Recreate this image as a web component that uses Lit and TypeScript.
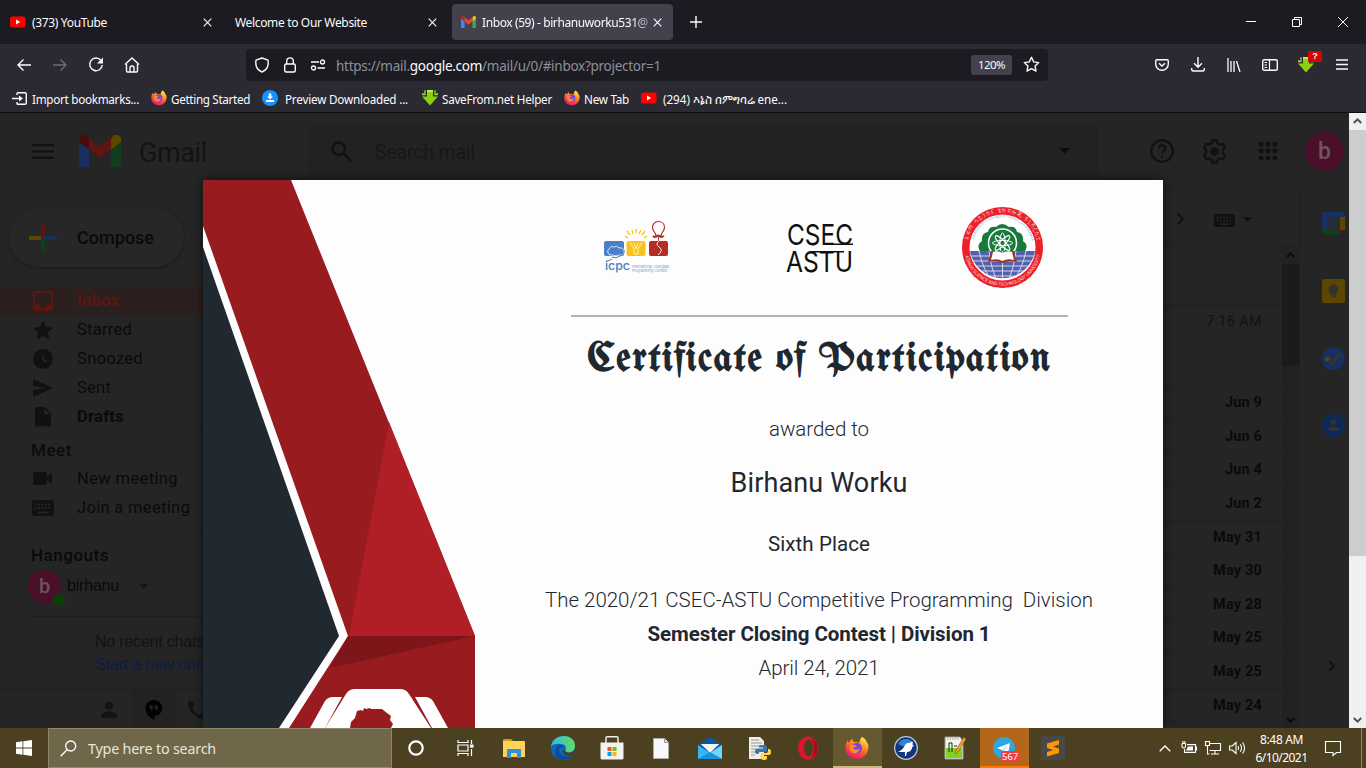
import { LitElement, html, svg, css } from "lit";
import { customElement, property } from "lit/decorators.js";
import { classMap } from "lit/directives/class-map.js";

/** Text run whose tracking is adjusted so that it spans a given width. */
@customElement("fit-text")
class FitText extends LitElement {
  @property({ type: Number }) w = 0;
  static styles = css`
    :host { display: inline-block; white-space: pre; flex: none; }
  `;
  firstUpdated() {
    const n = (this.textContent || "").length;
    const natural = this.getBoundingClientRect().width;
    if (this.w && n > 1) this.style.letterSpacing = `${(this.w - natural) / n}px`;
  }
  render() { return html`<slot></slot>`; }
}

const icon = (w: number, h: number, body: unknown, vb = `0 0 ${w} ${h}`) =>
  html`<svg width=${w} height=${h} viewBox=${vb} fill="none" preserveAspectRatio="none">${body}</svg>`;

const youtube = () => icon(16, 16, svg`<rect y="2.5" width="15.5" height="11" rx="2.5" fill="#f00"/><path d="M6 5.6v4.8L10.2 8z" fill="#fff"/>`);
const close = () => icon(9, 9, svg`<path d="M.7.7l7.6 7.6M8.3.7L.7 8.3" stroke="#fbfbfe" stroke-width="1.1"/>`);
const gmailM = (w: number, h: number, c: string[]) => icon(w, h, svg`
  <path d="M0 5v24q0 3 3 3h7V13z" fill=${c[0]}/><path d="M32 13v19h7q3 0 3-3V5z" fill=${c[1]}/>
  <path d="M32 4v11l10-8V4.5C42 0 37-1.500 34 1z" fill=${c[2]}/><path d="M10 3v12L0 7V4.500C0 0 5-1.500 8 1z" fill=${c[3]}/>
  <path d="M10 3l11 8.500L32 3v11.500l-11 8.500-11-8.500z" fill=${c[4]}/>`, "0 0 42 32");
const firefox = (s: number) => icon(s, s, svg`
  <defs><linearGradient id="ffo" x1=".8" y1="0" x2=".3" y2="1"><stop offset="0" stop-color="#fff44f"/><stop offset=".35" stop-color="#ff9a20"/><stop offset=".65" stop-color="#ff4a3c"/><stop offset="1" stop-color="#e31587"/></linearGradient></defs>
  <path d="M12 .5c2 1 3 2.300 3.400 4C17.500 7 16.500 10 15.500 12 14 15 11 16.300 8 16.200 3.500 16 .2 12.500.3 8.300.4 6 1 4.200 2 3c0 .8.300 1.300.7 1.700C3.300 3.600 4.200 2.700 5.200 2c0 1 .3 1.800 1 2.300C8 4.200 9 4.300 10 5c.5-1.500.8-3 2-4.500z" fill="url(#ffo)"/>
  <circle cx="8.300" cy="8.500" r="3.700" fill="#7542e5"/><path d="M3.500 6.500c2-1 3.500-.3 5 1-1.500 0-2 .8-2.800 1.200 1 1.300 3.300 1.300 4.800-.2-.3 3-3 4.500-5.300 3.400C3.400 11 2.800 8.500 3.500 6.500z" fill="#ff8a2a"/>`, "0 0 17 17");
const saveFrom = () => icon(16, 16, svg`<path d="M5 0h6v6.500h5L8 15.500 0 6.500h5z" fill="#8ad010"/><path d="M3 .3v4.400H.8V3M13 .3v4.400h2.200V3" stroke="#a8d840" stroke-width="1.300"/><path d="M5 0h6v2H5z" fill="#c0ea50"/>`);
const line = "#fbfbfe";
const chevR = () => icon(8, 12, svg`<path d="M1 1l5 5-5 5" stroke="#101010" stroke-width="1.800"/>`);
const caret = () => icon(11, 6, svg`<path d="M0 0h11L5.500 6z" fill="#0d0d0d"/>`);
const scrollArrow = (up: boolean, c: string) => icon(9, 6, svg`<path d=${up ? "M.8 5l3.700-3.700L8.200 5" : "M.8 1l3.700 3.700L8.200 1"} stroke=${c} stroke-width="2"/>`);

const shared = css`
  :host { box-sizing: border-box; }
  *, *::before { box-sizing: border-box; }
  svg { display: block; flex: none; overflow: visible; }
  .cell { display: flex; align-items: center; justify-content: center; flex: none; }
`;

@customElement("browser-chrome")
class BrowserChrome extends LitElement {
  static styles = [shared, css`
    :host { display: block; height: 113px; color: #fbfbfe; background: #2b2a33; border-bottom: 1px solid #0c0c0d; font: 12px/16px "Noto Sans", "Open Sans", sans-serif; }
    .tabs { display: flex; height: 44px; background: #1c1b22; align-items: center; }
    .tab { display: flex; align-items: center; height: 36px; width: 221px; border-radius: 4px; padding: 0 11px 0 9px; gap: 6px; flex: none; }
    .tab.first { width: 225px; padding: 0 13px 0 10px; }
    .tab.second { width: 227px; padding: 0 15px 0 10px; }
    .tab.on { background: #42414d; }
    .tab .name { flex: 1; white-space: nowrap; height: 16px; margin-top: 2px; min-width: 0; }
    .tab.on .name { -webkit-mask: linear-gradient(90deg, #000 88%, rgba(0, 0, 0, .25)); margin-right: -6px; }
    .plus { width: 45px; }
    .win { margin-left: auto; display: flex; height: 44px; }
    .win .cell { width: 46px; }
    .nav { display: flex; height: 40px; align-items: center; padding-top: 1px; }
    .nav .cell { width: 36px; }
    .left { display: flex; width: 246px; padding-left: 6px; }
    .url { display: flex; align-items: center; width: 802px; height: 32px; border-radius: 4px; background: #1c1b22; padding-left: 2px; }
    .url .cell { width: 28px; }
    .addr { color: #8f8f98; font-size: 13.500px; margin: 2px 0 0 4px; flex: 1; }
    .addr b { color: #fbfbfe; font-weight: 400; }
    .zoom { background: #42414d; border-radius: 3px; width: 41px; height: 20px; display: flex; align-items: center; justify-content: center; font-size: 11.500px; }
    .url .star { width: 36px; padding-left: 3px; }
    .tools { display: flex; margin-left: 96px; }
    .sf { position: relative; }
    .badge { position: absolute; left: 20px; top: -6px; width: 14px; height: 11px; background: #d90000; border-radius: 1px; font: bold 9px/11px "Liberation Sans", sans-serif; text-align: center; }
    .marks { display: flex; height: 28px; align-items: center; padding-left: 10px; font-size: 11.700px; }
    .mark { display: flex; align-items: center; }
    .mark fit-text { margin-top: 2px; }
  `];
  render() {
    const mark = (ic: unknown, t: string, w: number, gap: number, ml: number) =>
      html`<div class="mark" style="gap:${gap}px;margin-left:${ml}px">${ic}<fit-text .w=${w}>${t}</fit-text></div>`;
    return html`
      <div class="tabs">
        <div class="tab first">${youtube()}<div class="name"><fit-text .w=${75}>(373) YouTube</fit-text></div>${close()}</div>
        <div class="tab second"><div class="name"><fit-text .w=${132}>Welcome to Our Website</fit-text></div>${close()}</div>
        <div class="tab on">${gmailM(15, 12, ["#4285f4", "#34a853", "#fbbc04", "#c5221f", "#ea4335"])}<div class="name"><fit-text .w=${166}>Inbox (59) - birhanuworku531@</fit-text></div>${close()}</div>
        <div class="cell plus">${icon(12, 12, svg`<path d="M6 0v12M0 6h12" stroke=${line} stroke-width="1.400"/>`)}</div>
        <div class="win">
          <div class="cell">${icon(10, 10, svg`<path d="M0 4.500h10" stroke="#fff"/>`)}</div>
          <div class="cell">${icon(10, 10, svg`<path d="M.5 2.500h7v7h-7zM2.500 2.500v-2h7v7h-2" stroke="#fff"/>`)}</div>
          <div class="cell">${icon(10, 10, svg`<path d="M0 0l10 10M10 0L0 10" stroke="#fff"/>`)}</div>
        </div>
      </div>
      <div class="nav">
        <div class="left">
          <div class="cell">${icon(16, 16, svg`<path d="M15 8H2M7.500 2.500L2 8l5.500 5.500" stroke=${line} stroke-width="1.400"/>`)}</div>
          <div class="cell">${icon(16, 16, svg`<path d="M1 8h13M8.500 2.500L14 8l-5.500 5.500" stroke="#6e6d75" stroke-width="1.400"/>`)}</div>
          <div class="cell">${icon(16, 16, svg`<path d="M13 3.500a6.300 6.300 0 1 0 1.300 4.500" stroke=${line} stroke-width="1.400"/><path d="M15 .5v6H9z" fill=${line}/>`)}</div>
          <div class="cell">${icon(16, 16, svg`<path d="M1 7.500L8 1l7 6.500M2.500 7v7q0 1 1 1h9q1 0 1-1V7M6 15v-4q0-2 2-2t2 2v4" stroke=${line} stroke-width="1.400"/>`)}</div>
        </div>
        <div class="url">
          <div class="cell">${icon(16, 16, svg`<path d="M8 1l6 2.200c.8 5-1 9.800-6 11.800C3 13 1.200 8.200 2 3.200z" stroke=${line} stroke-width="1.400" stroke-linejoin="round"/>`)}</div>
          <div class="cell">${icon(16, 16, svg`<rect x="2.700" y="7" width="10.600" height="8" rx="1.500" stroke=${line} stroke-width="1.400"/><path d="M4.700 7V4.200a3.300 3.300 0 0 1 6.600 0V7" stroke=${line} stroke-width="1.400"/>`)}</div>
          <div class="cell">${icon(16, 12, svg`<path d="M1 3h8M7.500 9H15" stroke=${line} stroke-width="1.400"/><circle cx="12.500" cy="3" r="2" stroke=${line} stroke-width="1.300"/><circle cx="3.500" cy="9" r="2" stroke=${line} stroke-width="1.300"/>`)}</div>
          <div class="addr"><fit-text .w=${325}>https://mail.<b>google.com</b>/mail/u/0/#inbox?projector=1</fit-text></div>
          <div class="zoom"><fit-text .w=${27}>120%</fit-text></div>
          <div class="cell star">${icon(17, 17, svg`<path d="M8.500 1.300l2.200 4.600 5 .7-3.600 3.500.9 5-4.500-2.400L4 15.100l.9-5L1.300 6.600l5-.7z" stroke=${line} stroke-width="1.400" stroke-linejoin="round"/>`)}</div>
        </div>
        <div class="tools">
          <div class="cell">${icon(14, 12, svg`<path d="M2 .7h10q1.300 0 1.300 1.300v3c0 3.500-2.800 6.300-6.300 6.300S.7 8.500.7 5V2Q.7.700 2 .7zM4 4.300l3 2.800 3-2.800" stroke=${line} stroke-width="1.400"/>`)}</div>
          <div class="cell">${icon(14, 15, svg`<path d="M7 0v10M3 6.200l4 4 4-4M.7 11v1.500q0 1.500 1.500 1.500h9.600q1.500 0 1.500-1.500V11" stroke=${line} stroke-width="1.400"/>`)}</div>
          <div class="cell">${icon(14, 14, svg`<path d="M1 0v14M4 3v11M7 3v11M9.500 3L13 14" stroke=${line} stroke-width="1.300"/>`)}</div>
          <div class="cell">${icon(16, 12, svg`<rect x=".7" y=".7" width="14.600" height="10.600" rx="1.500" stroke=${line} stroke-width="1.400"/><path d="M7.500 0v12M2.500 3.500H5M2.500 6H5M2.500 8.500H5" stroke=${line} stroke-width="1.200"/>`)}</div>
          <div class="cell sf">${saveFrom()}<span class="badge">?</span></div>
          <div class="cell">${icon(12, 11, svg`<path d="M0 1h12M0 5.500h12M0 10h12" stroke=${line} stroke-width="1.400"/>`)}</div>
        </div>
      </div>
      <div class="marks">
        ${mark(icon(16, 13, svg`<path d="M6 3V1.500Q6 .7 7 .7h7q1.300 0 1.300 1.300v9q0 1.300-1.300 1.300H7q-1 0-1-.8V10M1 6.500h9" stroke=${line} stroke-width="1.400"/><path d="M8 3.500l4 3-4 3z" fill=${line}/>`), "Import bookmarks...", 107, 5, 1)}
        ${mark(firefox(16), "Getting Started", 79, 4, 12)}
        ${mark(icon(16, 16, svg`<circle cx="8" cy="8" r="8" fill="#1791ff"/><path d="M6.700 3.500h2.600v3H11L8 9.500l-3-3h1.700zM4 10h8v2H4z" fill="#fff"/>`), "Preview Downloaded ...", 123, 7, 12)}
        ${mark(saveFrom(), "SaveFrom.net Helper", 110, 4, 14)}
        ${mark(firefox(16), "New Tab", 45, 4, 12)}
        ${mark(youtube(), "(294) እኔስ በምግባሬ ene...", 124, 6, 12)}
      </div>`;
  }
}

const RED = "#5e1612", BLUE = "#183060", GREEN = "#103d1b", YELLOW = "#5c4600";

@customElement("mail-page")
class MailPage extends LitElement {
  static styles = [shared, css`
    :host { display: flex; height: 615px; background: #252525; color: #0a0a0a; font: 16.600px/28px Roboto, sans-serif; overflow: hidden; }
    .main { width: 1349px; display: flex; flex-direction: column; flex: none; }
    .head { height: 77px; border-bottom: 1px solid #212121; display: flex; align-items: center; padding-left: 32px; flex: none; }
    .brand { font: 27px/36px Roboto, sans-serif; color: #131313; margin: 3px 0 0 18px; width: 168px; }
    .search { width: 791px; height: 55px; background: #222; border-radius: 8px; display: flex; align-items: center; padding: 0 28px 0 24px; gap: 23px; color: #171717; font-size: 19.500px; }
    .search .ph { flex: 1; margin-top: 3px; }
    .acts { display: flex; margin-left: 37px; }
    .acts .cell { width: 53px; }
    .me { width: 39px; height: 39px; border-radius: 50%; background: #4a1029; color: #6a5660; display: flex; align-items: center; justify-content: center; font: 500 23px/39px Roboto, sans-serif; margin-left: 11px; }
    .body { display: flex; flex: 1; min-height: 0; }
    .side { width: 203px; flex: none; display: flex; flex-direction: column; }
    .compose { width: 175px; height: 59px; margin: 18px 0 19px 9px; border-radius: 30px; box-shadow: 0 1px 3px rgba(0, 0, 0, .35); background: #272727; display: flex; align-items: center; gap: 20px; padding-left: 20px; font: 500 18px/28px Roboto, sans-serif; flex: none; }
    .row { height: 29px; display: flex; align-items: center; padding-left: 31px; flex: none; }
    .row .ic { width: 46px; }
    .row.sel { background: #2b201e; color: #5e1612; font-weight: 700; }
    .row.bold { font-weight: 700; }
    .row .ic svg { margin-left: 2px; }
    .row .ic.wide svg { margin-left: 1px; }
    .sec { padding: 9px 0 0 31px; height: 38px; font-weight: 500; font-size: 17px; border-top: 1px solid #202020; flex: none; }
    .sec.meet { margin-top: -5px; }
    .sec.chat { margin-top: 9px; }
    .user { display: flex; align-items: center; height: 34px; margin-left: 28px; flex: none; position: relative; font: 16px/20px "Liberation Sans", sans-serif; gap: 6px; }
    .user .me { width: 33px; height: 33px; font-size: 20px; margin: 0; }
    .dot { position: absolute; left: 25px; top: 25px; width: 12px; height: 12px; border-radius: 50%; background: #0f3d08; }
    .user svg { margin-left: 14px; }
    .chats { margin: 13px 0 0 28px; border-top: 1px solid #1f1f1f; padding: 13px 0 0 67px; height: 73px; font: 16px/23px "Liberation Sans", sans-serif; color: #121212; overflow: hidden; flex: none; }
    .link { color: #0a1d45; }
    .foot { display: flex; border-top: 1px solid #1f1f1f; height: 40px; padding-left: 87px; overflow: hidden; }
    .foot .cell { width: 44px; padding-top: 2px; }
    .foot .pick { background: #222; }
    .list { width: 1096px; display: flex; flex-direction: column; flex: none; }
    .bar { height: 57px; border-bottom: 1px solid #202020; display: flex; align-items: center; justify-content: flex-end; padding-right: 47px; flex: none; }
    .bar .next { margin: 2px 29px 0 0; }
    .bar .kb { margin: 5px 8px 0 0; }
    .bar > svg { margin-top: 2px; }
    .rows { display: flex; flex: 1; min-height: 0; }
    .mails { flex: 1; overflow: hidden; }
    .gap { height: 58px; border-bottom: 1px solid #202020; }
    .mail { display: flex; justify-content: flex-end; padding-right: 20px; height: 33.630px; line-height: 34px; border-bottom: 1px solid #202020; font-size: 14.500px; font-weight: 700; }
    .mail.read { height: 81px; font-weight: 400; color: #131313; }
    .sb { width: 17px; background: #222; display: flex; flex-direction: column; align-items: center; padding: 5px 0; }
    .sb .thumb { width: 17px; height: 102px; margin: 6px 0 auto; background: #1b1b1b; }
    .panel { width: 50px; border-left: 1px solid #1f1f1f; display: flex; flex-direction: column; align-items: center; padding: 22px 0 0 18px; flex: none; }
    .panel svg { margin-bottom: 44px; }
    .panel .more { margin: 179px 0 0 -4px; }
    .outer { width: 17px; background: #f0f0f0; display: flex; flex-direction: column; align-items: center; padding: 5px 0; flex: none; }
    .outer .thumb { width: 17px; height: 426px; background: #cdcdcd; margin: 6px 0 auto; }
  `];
  render() {
    const k = "#111";
    const nav = (ic: unknown, t: string, w: number, c = "") =>
      html`<div class=${classMap({ row: true, sel: c === "sel", bold: c === "bold" })}><div class=${classMap({ ic: true, wide: c === "wide" })}>${ic}</div><fit-text .w=${w}>${t}</fit-text></div>`;
    const dates: [string, number][] = [["Jun 9", 37], ["Jun 6", 37], ["Jun 4", 37], ["Jun 2", 37], ["May 31", 49], ["May 30", 49], ["May 28", 49], ["May 25", 49], ["May 25", 49], ["May 24", 49]];
    const keyboard = (w: number, h: number) => icon(w, h, svg`<rect width="22" height="16" rx="2" fill=${k}/><path d="M2.500 4.500h17M2.500 8h17" stroke="#252525" stroke-width="2" stroke-dasharray="2 1.400"/><path d="M6 12.500h10" stroke="#252525" stroke-width="1.800"/>`, "0 0 22 16");
    return html`
      <div class="main">
        <div class="head">
          ${icon(22, 15, svg`<path d="M0 1.200h22M0 7.500h22M0 13.800h22" stroke=${k} stroke-width="2.200"/>`)}
          <div style="width:25px"></div>
          ${gmailM(42, 32, [BLUE, GREEN, YELLOW, "#480d0b", RED])}
          <div class="brand"><fit-text .w=${68}>Gmail</fit-text></div>
          <div class="search">
            ${icon(21, 21, svg`<circle cx="7.700" cy="7.700" r="6.200" stroke=${k} stroke-width="2.600"/><path d="M12.500 12.500l7.300 7.300" stroke=${k} stroke-width="2.800"/>`)}
            <div class="ph"><fit-text .w=${100}>Search mail</fit-text></div>${caret()}
          </div>
          <div class="acts">
            <div class="cell">${icon(24, 24, svg`<circle cx="12" cy="12" r="10.800" stroke=${k} stroke-width="2.200"/><path d="M8.800 9.500c0-4.500 6.600-4.200 6.600 0 0 2.500-3.300 2.600-3.300 5.500" stroke=${k} stroke-width="2.100"/><circle cx="12" cy="18" r="1.300" fill=${k}/>`)}</div>
            <div class="cell">${icon(25, 25, svg`<path d="M10.200 1.300h4.600l.7 3 2.300 1.300 3-.9 2.300 4-2.300 2.200v3.200l2.300 2.200-2.300 4-3-.9-2.300 1.300-.7 3h-4.600l-.7-3-2.300-1.300-3 .9-2.300-4 2.300-2.200v-3.200L1.900 8.700l2.300-4 3 .9 2.300-1.300z" stroke=${k} stroke-width="2.200" stroke-linejoin="round"/><circle cx="12.500" cy="12.500" r="4.200" fill=${k}/>`)}</div>
            <div class="cell">${icon(20, 20, [3, 10, 17].map(x => [3, 10, 17].map(y => svg`<circle cx=${x} cy=${y} r="2.500" fill=${k}/>`)))}</div>
          </div>
          <div class="me">b</div>
        </div>
        <div class="body">
          <div class="side">
            <div class="compose">
              ${icon(28, 28, svg`<path d="M12 0h4v12l-4 4z" fill=${RED}/><path d="M12 14l4-2v16h-4z" fill=${GREEN}/><path d="M0 12h12v4H0z" fill=${YELLOW}/><path d="M16 12h12v4H12z" fill=${BLUE}/>`)}
              <fit-text .w=${77}>Compose</fit-text>
            </div>
            ${nav(icon(20, 20, svg`<rect x="1" y="1" width="18" height="18" rx="2" stroke=${RED} stroke-width="2"/><path d="M1 13.500h5.500a3.500 3.500 0 0 0 7 0H19V19H1z" fill=${RED}/>`), "Inbox", 42, "sel")}
            ${nav(icon(20, 20, svg`<path d="M10 .5l3 6.500 7 .7-5.300 4.700 1.500 7L10 15.800 3.800 19.400l1.500-7L0 7.700 7 7z" fill=${k}/>`), "Starred", 55)}
            ${nav(icon(20, 20, svg`<circle cx="10" cy="10" r="10" fill=${k}/><path d="M10 5v5.500l4.200 2.500" stroke="#252525" stroke-width="1.600"/>`), "Snoozed", 66)}
            ${nav(icon(20, 18, svg`<path d="M0 0l20 9-20 9v-7l14-2L0 7z" fill=${k}/>`), "Sent", 34)}
            ${nav(icon(20, 20, svg`<path d="M2 2q0-2 2-2h8l6 6v14H2z" fill=${k}/><path d="M11.500 1.500V7H17z" fill="#252525"/>`), "Drafts", 47, "bold")}
            <div class="sec meet"><fit-text .w=${41}>Meet</fit-text></div>
            ${nav(icon(19, 13, svg`<path d="M0 1.500Q0 0 1.500 0h11Q14 0 14 1.500V5l5-4v11l-5-4v3.500q0 1.500-1.500 1.500h-11Q0 13 0 11.500z" fill=${k}/>`), "New meeting", 101)}
            ${nav(keyboard(22, 16), "Join a meeting", 113, "wide")}
            <div class="sec chat"><fit-text .w=${78}>Hangouts</fit-text></div>
            <div class="user"><div class="me">b</div><span class="dot"></span><fit-text .w=${52}>birhanu</fit-text>${icon(9, 5, svg`<path d="M0 0h9L4.500 5z" fill="#161616"/>`)}</div>
            <div class="chats"><fit-text .w=${109}>No recent chats</fit-text><br><fit-text class="link" .w=${109}>Start a new one</fit-text></div>
            <div class="foot">
              <div class="cell">${icon(16, 18, svg`<circle cx="8" cy="4.500" r="4" fill="#131313"/><path d="M0 17v-2c0-6 16-6 16 0v2z" fill="#131313"/>`)}</div>
              <div class="cell pick">${icon(17, 20, svg`<path d="M8.500 0a8 8 0 0 1 1 16.200V20C3 17 .5 13 .5 8a8 8 0 0 1 8-8z" fill="#020202"/><path d="M4.500 5.500h3.200v3L6 11.500V8.500H4.500zM9.500 5.500h3.200v3L11 11.500V8.500H9.500z" fill="#242424"/>`)}</div>
              <div class="cell">${icon(18, 18, svg`<path d="M0 1q0-1 1-1h3.500q1 0 1 1l.5 3.500L4 7c1.500 3 4 5.500 7 7l2.500-2 3.500.5q1 0 1 1V17q0 1-1 1C8 18 0 10 0 1z" fill="#131313"/>`)}</div>
            </div>
          </div>
          <div class="list">
            <div class="bar"><div class="next">${chevR()}</div><div class="kb">${keyboard(21, 13)}</div>${icon(9, 5, svg`<path d="M0 0h9L4.500 5z" fill=${k}/>`)}</div>
            <div class="rows">
              <div class="mails">
                <div class="gap"></div>
                <div class="mail read"><fit-text .w=${56}>7:16 AM</fit-text></div>
                ${dates.map(([d, w]) => html`<div class="mail"><fit-text .w=${w}>${d}</fit-text></div>`)}
              </div>
              <div class="sb">${scrollArrow(true, "#0c0c0c")}<div class="thumb"></div>${scrollArrow(false, "#0c0c0c")}</div>
            </div>
          </div>
          <div class="panel">
            ${icon(23, 23, svg`<path d="M2 0h19q2 0 2 2v16l-5 5H2q-2 0-2-2V2Q0 0 2 0z" fill=${BLUE}/><path d="M18 5h5v13h-5z" fill=${YELLOW}/><path d="M0 18h18v5H2q-2 0-2-2z" fill=${GREEN}/><path d="M18 18h5l-5 5z" fill=${RED}/><path d="M5 5h13v13H5z" fill="#2b2b2b"/><text x="11.500" y="15.300" text-anchor="middle" font-family="Roboto" font-size="10.500" fill="#183060">31</text>`)}
            ${icon(23, 24, svg`<rect width="23" height="24" rx="2" fill=${YELLOW}/><circle cx="11.500" cy="10.500" r="5" fill="#35322b"/><path d="M9 14h5v2H9zM9 17.500h5" fill="#35322b" stroke="#35322b"/>`)}
            ${icon(23, 23, svg`<circle cx="11.500" cy="11.500" r="11.500" fill=${BLUE}/><circle cx="5.500" cy="12" r="2.600" fill=${YELLOW}/><path d="M10 16l7.500-8" stroke="#333" stroke-width="4" stroke-linecap="round"/>`)}
            ${icon(23, 23, svg`<circle cx="11.500" cy="11.500" r="11.500" fill="#0c2a55"/><circle cx="11.500" cy="8" r="3" fill="#333"/><path d="M6 16.500c0-5 11-5 11 0z" fill="#333"/>`)}
            <div class="more">${chevR()}</div>
          </div>
        </div>
      </div>
      <div class="outer">${scrollArrow(true, "#505050")}<div class="thumb"></div>${scrollArrow(false, "#505050")}</div>`;
  }
}

@customElement("award-certificate")
class AwardCertificate extends LitElement {
  static styles = [shared, css`
    :host { display: flex; width: 960px; height: 548px; background: #fdfdfd; color: #1f2830; box-shadow: 0 0 10px rgba(0, 0, 0, .6); font: 300 20.500px/34px Roboto, sans-serif; }
    .text { flex: none; width: 688px; height: 548px; display: flex; flex-direction: column; align-items: center; }
    .logos { display: flex; align-items: center; width: 440px; height: 83px; margin: 26px 0 0 10px; justify-content: space-between; }
    .logos .mid { margin-left: 8px; }
    .rule { width: 497px; height: 2px; background: #b2b2b2; margin-top: 26px; flex: none; }
    .title { font: 700 40px/50px "Old English Text MT", "UnifrakturMaguntia", "Liberation Serif", serif; margin: 18px 0 0 1px; }
    .to { margin-top: 27px; line-height: 34px; }
    .who { font-weight: 400; font-size: 27px; margin-top: 20px; }
    .place { font-weight: 400; margin-top: 27px; }
    .what { margin-top: 22px; }
    .bold { font-weight: 700; }
    .inner { display: flex; flex-direction: column; align-items: center; }
  `];
  render() {
    const petals = [0, 45, 90, 135].map(a => svg`<ellipse cx="41.500" cy="37" rx="2.600" ry="10" transform="rotate(${a} 41.500 37)" stroke="#fff" stroke-width="1"/>`);
    return html`
      ${icon(272, 548, svg`
        <path d="M0 67l136 389-60 92H0z" fill="#212930"/>
        <path d="M0 0h88l184 456v92H86l59-92L0 46z" fill="#981b1f"/>
        <path d="M186 242l86 214H146z" fill="#b01f25"/>
        <path d="M145 456h127l-145 32z" fill="#7d1519"/>
        <path d="M107 548l15-27q3-4 8-4h9l-17 31zM245 548l-15-27q-3-4-8-4h-10l17 31z" fill="#fff"/>
        <path d="M122 548l21-34q3-5 9-5h45q6 0 9 5l22 34z" fill="#fff"/>
        <path d="M147 548l1-6 4-4 2-7 4-1 2 1 1-3 2 1 4-1 1 1h11l5 4 4 3-1 4 3 4-2 4z" fill="#981b1f"/>`)}
      <div class="text"><div class="inner">
        <div class="logos">
          ${icon(66, 52, svg`
            <rect y="19" width="20" height="15" rx="2" fill="#4a80c8"/><rect x="22.500" y="19" width="19" height="15" rx="2" fill="#f9c21b"/><rect x="45" y="19" width="19" height="15" rx="2" fill="#b52d25"/>
            <path d="M5 27q2-4 5-2 3-2 5 1 4-1 5 3 0 5-5 4-3 2-6 0-4 1-5-2t1-4zM9 35q-5 3-8 4" fill="#4a80c8" stroke="#fff" stroke-width=".8"/><path d="M20 28q1 5-4 6-4 3-8 1M8 37l-6 3" stroke="#4a80c8"/>
            <path d="M24 16l-3-2M26 13l-3-4M29 12l-1-4M32 11V7M35 12l2-4M38 13l3-4M40 16l3-2" stroke="#f9c21b" stroke-width="1.300"/>
            <path d="M26 20l4 7v5h4v-5l4-7M30 21l2 6 2-6" stroke="#fff0b0"/>
            <path d="M54.500-.5c4 0 6 3 6 6s-3 5-3.500 8h-5c-.5-3-3.500-5-3.500-8s2-6 6-6z" stroke="#b52d25" stroke-width="1.200"/><path d="M49 14q2 2 5-.5 3 2.500 6 .5" stroke="#b52d25" stroke-width="2"/><path d="M54.500 14v5" stroke="#b52d25" stroke-width=".9"/><path d="M55 19q-4 3 0 6 5 3-1 8" stroke="#fff" stroke-width=".9"/>
            <text x="1" y="48" font-family="Inter" font-size="12.500" font-weight="500" fill="#4a80c8" textLength="25">icpc</text>
            <text x="28" y="45.500" font-family="Inter" font-size="4" fill="#4a80c8" textLength="37" lengthAdjust="spacingAndGlyphs">International Collegiate</text>
            <text x="28" y="50" font-family="Inter" font-size="4" fill="#4a80c8" textLength="35" lengthAdjust="spacingAndGlyphs">Programming Contest</text>`)}
          <div class="mid">${icon(68, 50, svg`
            <g font-family="Inter, Roboto" font-size="29" font-weight="400" fill="#0d1110"><text x="1" y="22" textLength="66" lengthAdjust="spacingAndGlyphs">CSEC</text><text x="0" y="49" textLength="67" lengthAdjust="spacingAndGlyphs">ASTU</text></g>
            <path d="M38 21.200h29M26 28.700h32" stroke="#0d1110" stroke-width="1.600"/>`)}</div>
          ${icon(83, 83, svg`
            <defs><clipPath id="sea"><path d="M9 45h65a33 33 0 0 1-65 0z"/></clipPath><path id="topArc" d="M6.500 41.500a35 35 0 0 1 70 0"/><path id="botArc" d="M3.300 41.500a38.200 38.200 0 0 0 76.400 0"/><path id="midArc" d="M11.500 41.500a30 30 0 0 1 60 0"/></defs>
            <circle cx="41.500" cy="41.500" r="40.500" fill="#ec2028"/><circle cx="41.500" cy="41.500" r="33" fill="#fff"/>
            <path d="M19 45q-4-6 2-10-1-8 6-9 1-6 8-5 6-6 13 0 7-1 8 5 7 1 6 9 6 4 2 10z" fill="#197a3d"/>
            <circle cx="41.500" cy="37" r="14" stroke="#fff" stroke-width="1.500" fill="#197a3d"/>${petals}
            <g clip-path="url(#sea)"><path d="M8 45h68v35H8z" fill="#5561ad"/><path d="M8 50h68M8 55h68M8 60h68M8 65h68M8 70h68M41.500 45v35M28 45q2 18 9 32M55 45q-2 18-9 32M18 45q4 20 15 32M65 45q-4 20-15 32" stroke="#dfe2f4" stroke-width=".9"/></g>
            <path d="M27 56l3-10q6-2 11.500 1 5.500-3 11.500-1l3 10q-8-2-14.500 1-6.500-3-14.500-1z" fill="#a03420"/><path d="M30 54l2-8q5-2 9.500 1v8q-5-3-11.500-1zM53 54l-2-8q-5-2-9.500 1v8q5-3 11.500-1z" fill="#fff"/>
            <text font-family="Noto Sans Ethiopic, sans-serif" font-size="6" fill="#fff" letter-spacing="1"><textPath href="#topArc" startOffset="7%">አዳማ ሳይንስና ቴክኖሎጂ ዩኒቨርሲቲ</textPath></text>
            <text font-family="Inter" font-size="3.200" fill="#3b9ad6"><textPath href="#midArc" startOffset="8%" textLength="80">YUUNIVARSIITII SAAYINSII FI TEKNOOLOJII ADAAMAA</textPath></text>
            <text font-family="Inter" font-size="4.500" fill="#fff"><textPath href="#botArc" startOffset="7%" textLength="104">ADAMA SCIENCE AND TECHNOLOGY UNIVERSITY</textPath></text>`)}
        </div>
        <div class="rule"></div>
        <div class="title"><fit-text .w=${463}>Certificate of Participation</fit-text></div>
        <div class="to"><fit-text .w=${100}>awarded to</fit-text></div>
        <div class="who"><fit-text .w=${177}>Birhanu Worku</fit-text></div>
        <div class="place"><fit-text .w=${102}>Sixth Place</fit-text></div>
        <div class="what"><fit-text .w=${548}>The 2020/21 CSEC-ASTU Competitive Programming  Division</fit-text></div>
        <div class="bold"><fit-text .w=${343}>Semester Closing Contest | Division 1</fit-text></div>
        <div><fit-text .w=${121}>April 24, 2021</fit-text></div>
      </div></div>`;
  }
}

@customElement("task-bar")
class TaskBar extends LitElement {
  static styles = [shared, css`
    :host { display: flex; height: 40px; background: #4b4020; color: #fff; font: 12px/18px "Noto Sans", "Open Sans", sans-serif; }
    .start { width: 48px; }
    .find { width: 344px; border: 1px solid #8f8567; background: #70674a; display: flex; align-items: center; padding-left: 11px; gap: 11px; font-size: 14.300px; color: #e8e5da; flex: none; }
    .find fit-text { margin-top: 2px; }
    .app { width: 49px; border-bottom: 2px solid transparent; padding: 2px 1px 0 0; position: relative; }
    .app.cur { background: #65592f; border-color: #cdb87c; }
    .app.alert { background: #b4661a; border-color: #ff7b00; }
    .count { position: absolute; left: 21px; top: 23px; background: #f03e3e; font: 9.500px/11px "Noto Sans", sans-serif; padding: 0 1px; border-radius: 1px; }
    .tray { margin-left: auto; display: flex; align-items: center; }
    .tray .cell { width: 24px; }
    .clock { width: 64px; display: flex; flex-direction: column; align-items: center; font-size: 12px; padding: 2px 0 0 1px; }
    .tray .note { width: 40px; }
    .show { width: 5px; height: 40px; border-left: 1px solid #8f8567; margin-left: 8px; }
  `];
  render() {
    const app = (ic: unknown, c = "") => html`<div class=${classMap({ cell: true, app: true, cur: c === "cur", alert: c === "alert" })}>${ic}${c === "alert" ? html`<span class="count">567</span>` : ""}</div>`;
    return html`
      <div class="cell start">${icon(16, 16, svg`<path d="M0 2.200l6.500-.9v6.300H0zM7.300 1.200L16 0v7.600H7.300zM0 8.400h6.500v6.300L0 13.800zM7.300 8.400H16V16l-8.700-1.200z" fill="#fff"/>`)}</div>
      <div class="find">${icon(17, 17, svg`<circle cx="10.700" cy="6" r="5" stroke="#fff" stroke-width="1.300"/><path d="M7 9.800L.7 16.200" stroke="#fff" stroke-width="1.300"/>`)}<fit-text .w=${128}>Type here to search</fit-text></div>
      ${app(icon(16, 16, svg`<circle cx="8" cy="8" r="6.700" stroke="#fff" stroke-width="2.200"/>`))}
      ${app(icon(17, 16, svg`<path d="M1 0v2.500h10V0M1 16v-2.500h10V16M1 5h10v6H1zM14.500 0v4M14.500 9v7" stroke="#fff" stroke-width="1.200"/><path d="M13 4.500h3.500v3.200H13z" fill="#fff"/>`))}
      ${app(icon(22, 19, svg`<path d="M0 1q0-1 1-1h7l2 2H0z" fill="#d9980a"/><path d="M0 2h21q1 0 1 1v15H0z" fill="#ffd05a"/><path d="M4 10h14v9h-4v-5H8v5H4z" fill="#2f8fe0"/>`))}
      ${app(icon(24, 24, svg`<defs><linearGradient id="eg" x1="0" x2="1"><stop stop-color="#35b8e8"/><stop offset="1" stop-color="#60df60"/></linearGradient></defs><circle cx="12" cy="12" r="12" fill="#0c68bd"/><path d="M0 11C1-3 24-4 24 10c0 6-7 8-10 5 2-2 1-7-4-7-5-.5-9 0-10 3z" fill="url(#eg)"/><path d="M8 14c0 6 8 8 14 5-4 6-12 5-14 4-6-4-5-10-1-13 2-2 6-1 7 1-3-1-6 0-6 3z" fill="#0a4c9a"/><path d="M14 15c3 3 7 2 10-1l-2 5c-7 2-12-1-10-6z" fill="#4b4020"/>`))}
      ${app(icon(24, 24, svg`<path d="M6 7V2q0-1.300 1.300-1.300h9.400Q18 .7 18 2v5" stroke="#eee" stroke-width="1.500"/><path d="M.5 6.500h23V22q0 1.500-1.500 1.500H2Q.5 23.500.5 22z" fill="#f2f2f2"/><path d="M7.500 11h4v4h-4z" fill="#f25022"/><path d="M12.500 11h4v4h-4z" fill="#7fba00"/><path d="M7.500 16h4v4h-4z" fill="#00a4ef"/><path d="M12.500 16h4v4h-4z" fill="#ffb900"/>`))}
      ${app(icon(16, 21, svg`<path d="M.5.500h11l4 4v16H.5z" fill="#f8f8f8" stroke="#aaa"/><path d="M11.500.500v4h4" stroke="#999" fill="#ddd"/>`))}
      ${app(icon(24, 22, svg`<path d="M0 8l12-8 12 8-12 9z" fill="#0a57a8"/><path d="M3 7h18l-9 9z" fill="#f4f4f4"/><path d="M0 8l12 8L24 8v14H0z" fill="#38b6f0"/><path d="M3 7.500h18L12 14z" fill="#f4f4f4"/><path d="M24 8v14L10 15l2 1z" fill="#6fd5fb"/><path d="M0 22l12-7 12 7z" fill="#1f90dc"/>`))}
      ${app(icon(24, 24, svg`<path d="M2 1h11l4 4v18H2z" fill="#eee"/><path d="M4 4h8M4 7h11M4 10h11M4 13h5M4 16h5M4 19h4" stroke="#999"/><path d="M13 9h5q2 0 2 2v3q0 2-2 2h-5q-1.500 0-1.500 2H10q-2 0-2-3 0-2.500 2-2.500h6v-1h-4V10q0-1 1-1z" fill="#3a76a8"/><path d="M21 13h1q2 0 2 3t-2 3h-6v1h4v2q0 2-3 2t-3.500-2v-3q0-2 2-2h3.500q2 0 2-2z" fill="#ffd548"/>`))}
      ${app(icon(24, 24, svg`<ellipse cx="12" cy="12" rx="10" ry="11.500" fill="#e0142c"/><path d="M15 2q7 4 6.500 10.500T15 22q3-4 3-10T15 2z" fill="#a8081c"/><ellipse cx="12.500" cy="12" rx="4.500" ry="8.500" fill="#4b4020"/>`))}
      ${app(firefox(24), "cur")}
      ${app(icon(24, 24, svg`<circle cx="12" cy="12" r="11.300" fill="#12367c" stroke="#bcd" stroke-width="1.200"/><path d="M4 8a9 9 0 0 1 16 0q-8 5-16 0z" fill="#2f80d8"/><path d="M4 16q5-2 7-7 2-3 5-2 1-2 3-1l-1 2 2 2q-2 0-2 2-1 4-5 4l-1 4h-1v-4q-4 0-7 0z" fill="#fff"/>`))}
      ${app(icon(22, 24, svg`<path d="M1 1h15l3 4v18H1z" fill="#f5f5ea" stroke="#999"/><path d="M2 12h16v10H2z" fill="#7ed321"/><path d="M3 3h12" stroke="#999" stroke-dasharray="1.500 1"/><path d="M5 7v9M5 7h3v9M10 10h3" stroke="#222"/><path d="M20 1l2 2-8 13-3 2 1-4z" fill="#f2a32c" stroke="#8b5013" stroke-width=".6"/>`))}
      ${app(icon(22, 22, svg`<circle cx="11" cy="11" r="11" fill="#2ea6df"/><path d="M4 11l13-5-2 11-4-3-2 2v-3z" fill="#fff"/><path d="M9 13l6-5-4 6-2 2z" fill="#b9d8ee"/>`), "alert")}
      ${app(icon(24, 24, svg`<rect width="24" height="24" rx="1" fill="#484848"/><path d="M6 7.500L18 4v4.500l-6 2 6 2V17L6 20.500V16l6-2-6-2z" fill="#ff9800"/>`))}
      <div class="tray">
        <div class="cell">${icon(12, 7, svg`<path d="M.7 6.300L6 1l5.300 5.300" stroke="#fff" stroke-width="1.300"/>`)}</div>
        <div class="cell">${icon(16, 14, svg`<path d="M6 3.600h8.500v7.800H3.500V8M14.500 6h1v3h-1M1 2.500v2.800q0 1.700 1.700 1.700T4.500 5.300V2.500H1M2 0v2.500M3.800 0v2.500" stroke="#fff" stroke-width="1.100"/><path d="M7 5.500h5v4H5z" fill="#fff"/>`)}</div>
        <div class="cell">${icon(16, 14, svg`<path d="M4.500 2.500h11v7h-11M10 9.500v3M6 13h8M.5.500h4v4h-4zM2.500 4.500V13h2" stroke="#fff" stroke-width="1.100"/>`)}</div>
        <div class="cell">${icon(17, 14, svg`<path d="M.6 5v4h2.600L7 12.500v-11L3.200 5zM9 5q1.300 2 0 4M11.300 3.300q2.500 3.700 0 7.400M13.600 1.500q4 5.500 0 11" stroke="#fff" stroke-width="1.100"/>`)}</div>
        <div class="clock"><fit-text .w=${43}>8:48 AM</fit-text><fit-text .w=${52}>6/10/2021</fit-text></div>
        <div class="cell note">${icon(16, 15, svg`<path d="M.5.500h15v11h-4L8 14.500V11.500H.5z" stroke="#fff" stroke-width="1.100"/>`)}</div>
        <div class="show"></div>
      </div>`;
  }
}

@customElement("app-root")
class AppRoot extends LitElement {
  static styles = css`
    :host { display: block; width: 1366px; height: 768px; overflow: hidden; }
    .view { position: relative; height: 615px; overflow: hidden; }
    .overlay { position: absolute; left: 203px; top: 67px; }
  `;
  render() {
    return html`
      <browser-chrome></browser-chrome>
      <div class="view"><mail-page></mail-page><award-certificate class="overlay"></award-certificate></div>
      <task-bar></task-bar>`;
  }
}
